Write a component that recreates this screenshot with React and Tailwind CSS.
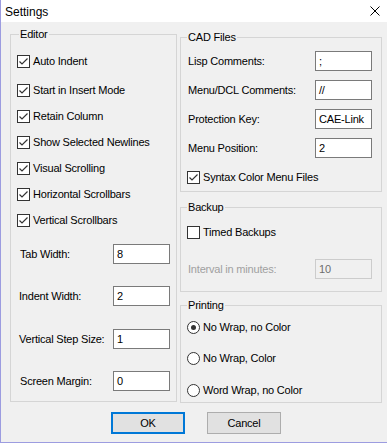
import React from "react";

function Check({ checked }) {
  return (
    <span className="w-[13px] h-[13px] border border-[#333333] bg-white shrink-0 flex items-center justify-center">
      {checked && (
        <svg width="11" height="11" viewBox="0 0 11 11">
          <polyline points="1.5,5.5 4,8 9.5,2.5" fill="none" stroke="#333333" strokeWidth="1.2" />
        </svg>
      )}
    </span>
  );
}

function Radio({ checked }) {
  return (
    <span className="w-[13px] h-[13px] rounded-full border border-[#333333] bg-white shrink-0 flex items-center justify-center">
      {checked && <span className="w-[5px] h-[5px] rounded-full bg-[#333333]"></span>}
    </span>
  );
}

function CheckRow({ label, checked = true, className = "" }) {
  return (
    <div className={"flex items-center gap-[3px] " + className}>
      <Check checked={checked} />
      <span className="leading-[13px] whitespace-nowrap">{label}</span>
    </div>
  );
}

function RadioRow({ label, checked = false, className = "" }) {
  return (
    <div className={"flex items-center gap-[3px] h-[13px] " + className}>
      <Radio checked={checked} />
      <span className="leading-[13px] whitespace-nowrap">{label}</span>
    </div>
  );
}

function Input({ value, disabled = false }) {
  return (
    <div
      className={
        disabled
          ? "w-[57px] h-[20px] border border-[#cccccc] bg-[#f0f0f0] text-[#6d6d6d] pl-[3px] flex items-center"
          : "w-[57px] h-[20px] border border-[#7a7a7a] bg-white pl-[3px] flex items-center"
      }
    >
      {value}
    </div>
  );
}

export default function App() {
  return (
    <div className="w-[387px] h-[444px] bg-white font-['Liberation_Sans',Arial,sans-serif] text-[11px] text-black">
      <div className="h-[443px] border-l border-b border-[#9c9ce0] flex flex-col">
        <div className="h-[22px] bg-white flex items-center justify-between pl-[4px] pr-[7px] shrink-0">
          <span className="text-[12px] leading-[14px] pt-[1px]">Settings</span>
          <svg width="10" height="10" viewBox="0 0 10 10">
            <path d="M0.5 0.5 L9.5 9.5 M9.5 0.5 L0.5 9.5" stroke="#000000" strokeWidth="1" fill="none" />
          </svg>
        </div>
        <div className="flex-1 bg-[#f0f0f0] flex flex-col pl-[9px] tracking-[-0.2px]">
          <div className="flex">
            {/* Editor */}
            <fieldset className="mt-[6px] w-[167px] h-[374px] border border-[#d5d5d5] pl-[6px] pt-[7px] flex flex-col">
              <legend className="ml-[2px] px-[1px] leading-[13px]">Editor</legend>
              <CheckRow label="Auto Indent" className="h-[26px] mb-[3px]" />
              <CheckRow label="Start in Insert Mode" className="h-[26px]" />
              <CheckRow label="Retain Column" className="h-[26px]" />
              <CheckRow label="Show Selected Newlines" className="h-[26px]" />
              <CheckRow label="Visual Scrolling" className="h-[26px]" />
              <CheckRow label="Horizontal Scrollbars" className="h-[26px]" />
              <CheckRow label="Vertical Scrollbars" className="h-[26px]" />
              <div className="flex items-center mt-[11px]">
                <span className="ml-[3px] w-[93px]">Tab Width:</span>
                <Input value="8" />
              </div>
              <div className="flex items-center mt-[22px]">
                <span className="ml-[2px] w-[94px]">Indent Width:</span>
                <Input value="2" />
              </div>
              <div className="flex items-center mt-[23px]">
                <span className="ml-[2px] w-[94px]">Vertical Step Size:</span>
                <Input value="1" />
              </div>
              <div className="flex items-center mt-[22px]">
                <span className="ml-[3px] w-[93px]">Screen Margin:</span>
                <Input value="0" />
              </div>
            </fieldset>

            {/* Right column */}
            <div className="ml-[3px] w-[202px] flex flex-col">
              <fieldset className="mt-[9px] h-[161px] border border-[#d5d5d5] pl-[6px] pr-[9px] pt-[7px] flex flex-col">
                <legend className="px-[1px] leading-[13px]">CAD Files</legend>
                <div className="flex items-center justify-between h-[20px]">
                  <span className="ml-[1px]">Lisp Comments:</span>
                  <Input value=";" />
                </div>
                <div className="flex items-center justify-between h-[20px] mt-[9px]">
                  <span className="ml-[1px]">Menu/DCL Comments:</span>
                  <Input value="//" />
                </div>
                <div className="flex items-center justify-between h-[20px] mt-[9px]">
                  <span className="ml-[1px]">Protection Key:</span>
                  <Input value="CAE-Link" />
                </div>
                <div className="flex items-center justify-between h-[20px] mt-[9px]">
                  <span className="ml-[1px]">Menu Position:</span>
                  <Input value="2" />
                </div>
                <CheckRow label="Syntax Color Menu Files" className="mt-[13px] h-[13px]" />
              </fieldset>

              <fieldset className="mt-[9px] h-[91px] border border-[#d5d5d5] pl-[6px] pr-[9px] pt-[12px] flex flex-col">
                <legend className="px-[1px] leading-[13px]">Backup</legend>
                <CheckRow label="Timed Backups" checked={false} className="h-[13px]" />
                <div className="flex items-center justify-between h-[20px] mt-[20px]">
                  <span className="ml-[1px] text-[#a0a0a0]">Interval in minutes:</span>
                  <Input value="10" disabled />
                </div>
              </fieldset>

              <fieldset className="mt-[7px] h-[104px] border border-[#d5d5d5] pl-[6px] pr-[9px] pt-[9px] flex flex-col">
                <legend className="px-[1px] leading-[13px]">Printing</legend>
                <RadioRow label="No Wrap, no Color" checked />
                <RadioRow label="No Wrap, Color" className="mt-[18px]" />
                <RadioRow label="Word Wrap, no Color" className="mt-[19px]" />
              </fieldset>
            </div>
          </div>

          <div className="flex pl-[101px] gap-[22px] mt-[9px]">
            <button className="w-[74px] h-[22px] border-2 border-[#0078d7] bg-[#e1e1e1] flex items-center justify-center">
              OK
            </button>
            <button className="w-[74px] h-[22px] border border-[#adadad] bg-[#e1e1e1] flex items-center justify-center">
              Cancel
            </button>
          </div>
        </div>
      </div>
    </div>
  );
}
